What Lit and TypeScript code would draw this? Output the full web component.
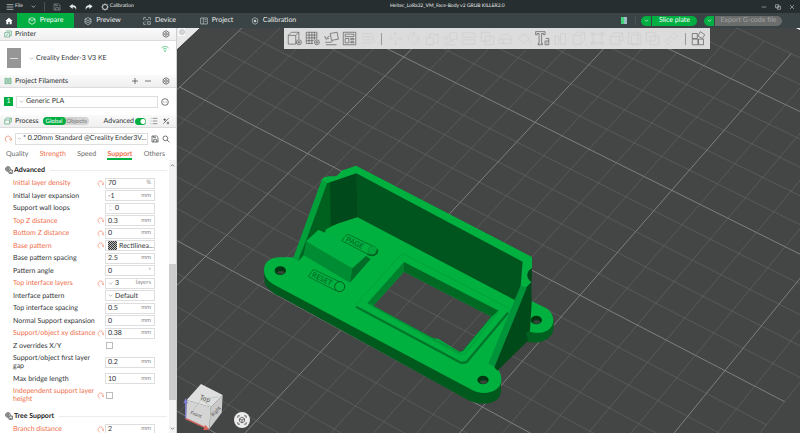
import { LitElement, html, svg, css, nothing } from "lit";
import { customElement } from "lit/decorators.js";
import { classMap } from "lit/directives/class-map.js";

/* ---------- icons, drawn on a 24 unit grid ---------- */
const shapes: Record<string, unknown> = {
  menu: svg`<path d="M2 5H22M2 12H22M2 19H22"/>`,
  chevron: svg`<path d="M4 8l8 8 8-8"/>`,
  up: svg`<path d="M4 16l8-8 8 8"/>`,
  save: svg`<path d="M3 3H17L21 7V21H3ZM8 21V14H17V21M8 3V8H15"/>`,
  undo: svg`<path class="solid" d="M11 3L1 10L11 18V13C17 12 20 15 21 21C24 12 19 7 11 7Z"/>`,
  redo: svg`<path class="solid" d="M13 3L23 10L13 18V13C7 12 4 15 3 21C0 12 5 7 13 7Z"/>`,
  gear: svg`<path d="M12 2L20.500 7V17L12 22L3.500 17V7Z"/><circle cx="12" cy="12" r="4"/>`,
  cog: svg`<circle cx="12" cy="12" r="8"/><path d="M12 1V7M12 17V23M1 12H7M17 12H23M4 4L8 8M20 4L16 8M4 20L8 16M20 20L16 16"/>`,
  home: svg`<path class="solid" d="M12 2L1 12H4V22H10V15H14V22H20V12H23Z"/>`,
  cube: svg`<path d="M12 2L21 6V17L12 22L3 17V6ZM3 6L12 11L21 6"/>`,
  layers: svg`<path d="M12 2L21 6L12 11L3 6ZM3 6V18L12 23L21 18V6M3 12L12 17L21 12"/>`,
  device: svg`<path d="M2 9V2H9M15 2H22V9M2 15V22H9M14 14H22V22H14ZM8 8H16M8 14H5"/>`,
  project: svg`<path d="M2 3H22V21H2ZM10 3V21M14 8H19M14 13H19"/>`,
  target: svg`<path d="M12 2L20 6V17L12 22L4 17V6Z"/><circle class="solid" cx="12" cy="12" r="4"/>`,
  minimize: svg`<path d="M3 12H21"/>`,
  restore: svg`<path d="M2 3H15V15H2ZM9 9H22V21H9Z"/>`,
  close: svg`<path d="M4 4L20 20M20 4L4 20"/>`,
  plus: svg`<path d="M12 3V21M3 12H21"/>`,
  dots: svg`<circle cx="12" cy="12" r="10"/><path d="M6 12H8M11 12H13M16 12H18"/>`,
  panel: svg`<circle cx="12" cy="12" r="10"/><path d="M12 5V19M8 9V15M16 9V15"/>`,
  search: svg`<circle cx="10" cy="10" r="7"/><path d="M15 15L22 22"/>`,
  list: svg`<path d="M8 4H22M8 12H22M8 20H22M2 4H4M2 12H4M2 20H4"/>`,
  compare: svg`<path d="M4 20L20 4M4 8H12M8 4V12M14 18H21M18 14V22"/>`,
  wifi: svg`<path d="M1 9C7 3 17 3 23 9M6 13C9 10 15 10 18 13M10 17H14L12 20Z"/>`,
  revert: svg`<path d="M9 21C2 17 2 7 9 4C15 1 21 6 21 12M16 12L21 17L24 10"/>`,
  printer: svg`<path d="M6 3H22V17H17M2 8H17V21H2ZM6 17L13 12"/>`,
  spools: svg`<path d="M3 4H10V20H3ZM14 4H21V20H14ZM6 4V20M18 4V20"/>`,
  process: svg`<path d="M7 3H22V15H17M2 9H17V21H2ZM2 9L7 3M17 9L22 3"/>`,
  support: svg`<circle cx="9" cy="9" r="7"/><circle cx="9" cy="9" r="3"/><path d="M9 2V5M2 9H5M9 13V16M16 12H22V22H12V16M15 19H19"/>`,
  addCube: svg`<path d="M2 7H14V21H2ZM2 7L7 2H19L14 7M19 2V13"/><circle cx="19" cy="18" r="4"/><path d="M19 15.500V20.500M16.500 18H21.500"/>`,
  addPlate: svg`<path d="M2 2H19V12M2 2V20H13M2 6.500H19M2 11H19M2 15.500H14M6.500 2V20M11 2V20M15 2V14"/><circle cx="19" cy="18" r="4"/><path d="M19 15.500V20.500M16.500 18H21.500"/>`,
  orient: svg`<path d="M10 4L21 2L23 13L12 15ZM9 8L4 11M1 8L3 13L8 12M2 18H11L14 16M3 22H20"/>`,
  arrange: svg`<path d="M2 2H22V22H2ZM5 5H19V9H5ZM5 12H11V19H5ZM14 12H19V14H14ZM14 17H19V19H14Z"/>`,
  lines: svg`<path d="M3 4H18M3 9H18M3 14H18M3 19H18M18 4L21 7V19"/>`,
  move: svg`<path d="M12 2V9M12 15V22M2 12H9M15 12H22M9 5L12 2L15 5M9 19L12 22L15 19M5 9L2 12L5 15M19 9L22 12L19 15"/>`,
  rotate: svg`<path d="M4 14C1 6 8 1 14 4L13 1M14 4L11 7M12 6L20 12L12 21L5 14ZM20 9C24 16 18 22 13 22"/>`,
  scale: svg`<path d="M2 11H13V22H2ZM7 11V5H21V19H13M15 9L20 4"/>`,
  cut: svg`<path d="M2 3H22V10H2ZM2 14H22V21H2Z"/>`,
  bool: svg`<path d="M2 2H16V16H2ZM8 8H22V22H8Z"/>`,
  paint: svg`<path d="M3 12L12 4L20 13L11 20ZM7 3L12 8M21 14V20"/>`,
  hull: svg`<path d="M2 13L8 5H17L21 12M2 13H21V20H2ZM8 13V20"/>`,
  text: svg`<path d="M1 1H16V6H13.500V4H10.500V20H12V22H5V20H6.500V4H3.500V6H1Z"/><path d="M17 12H22V22H16V16H22M19 18V20"/>`,
  steps: svg`<path d="M3 8H9V21H3ZM12 4H20V21H12Z"/>`,
  box: svg`<path d="M2 7H14V21H2ZM2 7L8 2H20L14 7M20 2V15L14 21"/>`,
  points: svg`<path d="M5 5H19V19H5ZM2 2H6V6H2ZM18 2H22V6H18ZM2 18H6V22H2ZM18 18H22V22H18Z"/>`,
  frame: svg`<path d="M2 2H18V20H2ZM7 6H22V22H7Z"/>`,
  ruler: svg`<path d="M2 17L16 3L21 8L7 22ZM6 13L9 16M10 9L13 12"/>`,
  assembly: svg`<path d="M2 4H10V12H2ZM2 13H11V22H2ZM12 13H20V22H12ZM15 1L22 6L18 12L11 8Z"/>`,
  focus: svg`<path d="M2 7V2H7M17 2H22V7M22 17V22H17M7 22H2V17M12 5L18 9V15L12 19L6 15V9ZM6 9L12 12L18 9M12 12V19"/>`,
};

const icon = (name: string, kind = "") =>
  html`<svg class="icon ${kind}" viewBox="0 0 24 24" aria-hidden="true">${shapes[name]}</svg>`;

const iconStyles = css`
  .icon { width: 8px; height: 8px; flex: none; display: block; fill: none; stroke: currentColor; stroke-width: 2; }
  .icon .solid { fill: currentColor; stroke: none; }
  .icon.tiny { width: 5px; height: 5px; stroke-width: 3; }
  .icon.big { width: 15px; height: 15px; stroke-width: 1; }
  button, input, select { font: inherit; color: inherit; text-rendering: inherit; margin: 0; padding: 0; border: 0; background: none; outline: 0; min-width: 0; }
  button { display: flex; align-items: center; justify-content: center; white-space: nowrap; }
  * { box-sizing: border-box; }
`;

/* ---------- window title and main tabs ---------- */
@customElement("app-header")
class AppHeader extends LitElement {
  static styles = [iconStyles, css`
    :host { display: block; color: #e6e8e8; }
    .title { display: flex; justify-content: space-between; align-items: center; height: 13px; background: #262e30; font-size: 5px; }
    .menu { display: flex; align-items: center; gap: 8px; padding-left: 6px; }
    .menu button { gap: 1px; }
    .rule { width: 1px; height: 9px; background: #4a5254; }
    .dim { color: #8d9597; }
    h1 { margin: 0; font-size: 5px; font-weight: 400; }
    .window { display: flex; gap: 8px; padding-right: 5px; }
    .window .icon { width: 6px; height: 6px; }
    .bar { display: flex; height: 15px; background: #3a4446; }
    .home { width: 17px; color: #fff; }
    .tab { width: 57px; gap: 4px; }
    .tab .icon { stroke-width: 2; color: #c5cbcc; }
    .active { background: #00ae42; color: #fff; }
    .active .icon { color: #fff; }
    .actions { display: flex; align-items: center; margin-left: auto; padding-right: 18px; }
    .actions .rule { margin: 0 5px 0 8px; }
    .pill { display: flex; gap: 1px; height: 10px; margin-right: 7px; border-radius: 5px; overflow: hidden; }
    .pill:last-child { margin-right: 0; }
    .pill button { background: #00ae42; color: #fff; }
    .pill .drop { width: 10px; }
    .pill .slice { width: 45px; }
    .pill .export { width: 67px; background: #6b6d6d; color: #a0a2a2; }
    .stats { width: 6px; height: 7px; background: linear-gradient(90deg, #44d57a 50%, #9bbcc0 50%); }
  `];
  render() {
    const tabs = [["Prepare", "cube"], ["Preview", "layers"], ["Device", "device"], ["Project", "project"], ["Calibration", "target"]];
    return html`
      <header class="title">
        <div class="menu">
          <button>${icon("menu")}File</button>
          <button aria-label="File menu">${icon("chevron", "tiny")}</button>
          <span class="rule"></span>
          <button class="dim" aria-label="Save">${icon("save")}</button>
          <button aria-label="Undo">${icon("undo")}</button>
          <button aria-label="Redo">${icon("redo")}</button>
          <button>${icon("cog")}Calibration</button>
        </div>
        <h1>Heltec_LoRa32_VM_Face-Body v2 GRUB KILLER2.0</h1>
        <div class="window">
          <button aria-label="Minimize">${icon("minimize")}</button>
          <button aria-label="Restore">${icon("restore")}</button>
          <button aria-label="Close">${icon("close")}</button>
        </div>
      </header>
      <nav class="bar">
        <button class="home" aria-label="Home">${icon("home")}</button>
        ${tabs.map(([t, i], n) => html`<button class=${classMap({ tab: true, active: n === 0 })}>${icon(i)}${t}</button>`)}
        <div class="actions">
          <span class="stats"></span><span class="rule"></span>
          <div class="pill"><button class="drop" aria-label="Slice options">${icon("chevron", "tiny")}</button><button class="slice">Slice plate</button></div>
          <div class="pill"><button class="drop" aria-label="Export options">${icon("chevron", "tiny")}</button><button class="export">Export G-code file</button></div>
        </div>
      </nav>`;
  }
}

/* ---------- settings panel ---------- */
interface Setting {
  label: string;
  value?: string;
  unit?: string;
  changed?: boolean;
  kind?: "text" | "spin" | "select" | "combo" | "pattern" | "check";
}

const advanced: Setting[] = [
  { label: "Initial layer density", value: "70", unit: "%", changed: true },
  { label: "Initial layer expansion", value: "-1", unit: "mm" },
  { label: "Support wall loops", value: "0", kind: "spin" },
  { label: "Top Z distance", value: "0.3", unit: "mm", changed: true },
  { label: "Bottom Z distance", value: "0", unit: "mm", changed: true },
  { label: "Base pattern", value: "Rectilinea...", kind: "pattern", changed: true },
  { label: "Base pattern spacing", value: "2.5", unit: "mm" },
  { label: "Pattern angle", value: "0", unit: "°" },
  { label: "Top interface layers", value: "3", unit: "layers", kind: "combo", changed: true },
  { label: "Interface pattern", value: "Default", kind: "select" },
  { label: "Top interface spacing", value: "0.5", unit: "mm" },
  { label: "Normal Support expansion", value: "0", unit: "mm" },
  { label: "Support/object xy distance", value: "0.38", unit: "mm", changed: true },
  { label: "Z overrides X/Y", kind: "check" },
  { label: "Support/object first layer gap", value: "0.2", unit: "mm" },
  { label: "Max bridge length", value: "10", unit: "mm" },
  { label: "Independent support layer height", kind: "check", changed: true },
];
const tree: Setting[] = [{ label: "Branch distance", value: "2", unit: "mm", changed: true }];

@customElement("settings-panel")
class SettingsPanel extends LitElement {
  static styles = [iconStyles, css`
    :host { display: flex; flex-direction: column; min-height: 0; background: #fff; color: #333637; }
    h2, h3 { margin: 0; font-size: inherit; font-weight: 400; }
    .head { display: flex; align-items: center; flex: none; height: 13px; padding: 0 6px 0 4px; gap: 3px; background: linear-gradient(#fafafa, #efefef); border-bottom: 1px solid #dcdcdc; }
    .head > .icon { color: #4fa477; }
    .head h2 { color: #2c2e2f; }
    .push { margin-left: auto; }
    .head .add { margin-right: 2px; }
    .head .remove { margin-right: 7px; }
    .printer { display: flex; align-items: center; flex: none; height: 34px; padding: 0 7px; }
    .thumb { display: grid; place-items: center; width: 14px; height: 20px; background: #969696; }
    .thumb span { width: 8px; height: 1px; background: #ddd; }
    select { appearance: none; flex: 1; overflow: hidden; text-overflow: clip; white-space: nowrap; }
    .drop { display: flex; align-items: center; gap: 2px; flex: 1; min-width: 0; color: #9a9a9a; }
    .drop select { color: #333637; }
    .printer .drop { margin-left: 8px; }
    .signal { align-self: flex-start; margin-top: 4px; color: #2fbb67; }
    .slot { display: flex; align-items: center; flex: none; gap: 3px; padding: 0 7px 0 4px; }
    .filament { height: 27px; }
    .slot .drop { height: 12px; padding-left: 2px; border: 1px solid #dedede; }
    .preset { height: 21px; padding-right: 6px; }
    .preset .drop { gap: 1px; padding-left: 1px; }
    .swatch { width: 9px; height: 9px; background: #00ae42; color: #fff; line-height: 9px; text-align: center; }
    .orange { color: #ef6f4c; }
    .scope { display: flex; align-items: center; height: 8px; margin-left: 1px; border-radius: 4px; background: #d4d4d4; font-size: 6px; color: #777; }
    .scope button { height: 8px; padding: 0 2px 0 1px; border-radius: 4px; }
    .scope .on { padding: 0 3px; background: #00ae42; color: #fff; }
    .switch { display: flex; align-items: center; gap: 1px; margin-left: auto; }
    .switch input { appearance: none; width: 11px; height: 7px; border-radius: 4px; background: radial-gradient(circle at 8px 50%, #fff 2px, #00ae42 3px); }
    .head .listing { margin: 0 1px 0 1px; color: #666; }
    .tabs { display: flex; justify-content: space-between; flex: none; height: 11px; padding: 0 11px 0 6px; }
    .tabs button { color: #6c6c6c; border-bottom: 1px solid transparent; }
    .tabs .changed { color: #ef6f4c; }
    .tabs .current { font-weight: 700; border-bottom: 2px solid #00ae42; padding-top: 1px; }
    .scroll { display: flex; flex: 1; min-height: 0; }
    .list { flex: 1; min-width: 0; overflow: hidden; padding: 3px 2px 0 5px; }
    .group { display: flex; align-items: center; gap: 1px; height: 14px; font-weight: 700; color: #222; }
    .group h3 { font-weight: 700; }
    .group::after { content: ""; flex: 1; height: 1px; margin-left: 4px; background: #ececec; }
    .row { display: grid; grid-template-columns: 83px 7px 50px; gap: 0 1px; align-items: center; min-height: 12px; padding-left: 8px; line-height: 8px; }
    .row:nth-of-type(even) { min-height: 13px; }
    .row.two { min-height: 20px; }
    .row.changed .name, .row.changed > .icon { color: #ef6f4c; }
    .row > .icon { width: 7px; height: 7px; }
    .field { display: flex; align-items: center; grid-column: 3; height: 11px; padding: 0 3px 0 2px; gap: 2px; border: 1px solid #dedede; }
    .field.pattern { padding: 0 0 0 2px; }
    .field input, .field select { flex: 1; width: 10px; height: 9px; }
    .field .unit { font-size: 6px; color: #8c8c8c; }
    .field > .icon { color: #999; }
    .spin { display: flex; flex-direction: column; color: #999; }
    .spin .icon { width: 5px; height: 4px; }
    .hatch { width: 9px; height: 9px; background: repeating-conic-gradient(#333 0 25%, #bbb 0 50%) 0 0 / 2px 2px; }
    .tick { grid-column: 3; appearance: none; width: 7px; height: 7px; margin-left: 1px; border: 1px solid #bdbdbd; background: #fff; }
    .later { margin-top: 4px; }
    .bar { display: flex; flex-direction: column; align-items: center; justify-content: space-between; width: 7px; padding: 3px 0 2px; background: linear-gradient(#f3f3f3 38%, #cdcdcd 38% 88%, #f3f3f3 88%); color: #444; }
  `];

  row(s: Setting) {
    const id = s.label.replace(/\W+/g, "-").toLowerCase();
    const kind = s.kind ?? "text";
    const two = s.label.length > 28;
    return html`<div class=${classMap({ row: true, changed: !!s.changed, two })}>
      <label class="name" for=${id}>${s.label}</label>
      ${s.changed ? icon("revert") : nothing}
      ${kind === "check"
        ? html`<input class="tick" type="checkbox" id=${id}>`
        : html`<div class=${classMap({ field: true, pattern: kind === "pattern" })}>
            ${kind === "spin" ? html`<span class="spin">${icon("up")}${icon("chevron")}</span>` : nothing}
            ${kind === "select" || kind === "combo" ? icon("chevron", "tiny") : nothing}
            ${kind === "pattern" ? html`<span class="hatch"></span>` : nothing}
            ${kind === "select" || kind === "pattern"
              ? html`<select id=${id}><option>${s.value}</option></select>`
              : html`<input id=${id} value=${s.value}>`}
            ${s.unit ? html`<span class="unit">${s.unit}</span>` : nothing}
          </div>`}
    </div>`;
  }

  render() {
    return html`
      <div class="head">${icon("printer")}<h2>Printer</h2><button class="push" aria-label="Printer settings">${icon("gear")}</button></div>
      <div class="printer">
        <div class="thumb"><span></span></div>
        <div class="drop">${icon("chevron", "tiny")}<select aria-label="Printer"><option>Creality Ender-3 V3 KE</option></select></div>
        <span class="signal">${icon("wifi")}</span>
      </div>
      <div class="head">${icon("spools")}<h2>Project Filaments</h2>
        <button class="push add" aria-label="Add filament">${icon("plus")}</button>
        <button class="remove" aria-label="Remove filament">${icon("minimize")}</button>
        <button aria-label="Filament settings">${icon("gear")}</button>
      </div>
      <div class="slot filament">
        <span class="swatch">1</span>
        <div class="drop">${icon("chevron", "tiny")}<select aria-label="Filament"><option>Generic PLA</option></select></div>
        <button aria-label="More">${icon("dots")}</button>
      </div>
      <div class="head">${icon("process")}<h2>Process</h2>
        <div class="scope"><button class="on">Global</button><button>Objects</button></div>
        <label class="switch">Advanced<input type="checkbox" role="switch" checked></label>
        <button class="listing" aria-label="Setting list">${icon("list")}</button>
        <button aria-label="Compare presets">${icon("compare")}</button>
      </div>
      <div class="slot preset">
        <button class="orange" aria-label="Revert">${icon("revert")}</button>
        <div class="drop">${icon("chevron", "tiny")}<select aria-label="Process preset"><option>* 0.20mm Standard @Creality Ender3V...</option></select></div>
        <button aria-label="Save preset">${icon("save")}</button>
        <button aria-label="Search">${icon("search")}</button>
      </div>
      <div class="tabs">
        <button>Quality</button><button class="changed">Strength</button><button>Speed</button>
        <button class="changed current">Support</button><button>Others</button>
      </div>
      <div class="scroll">
        <div class="list">
          <section><header class="group">${icon("support")}<h3>Advanced</h3></header>${advanced.map((s) => this.row(s))}</section>
          <section class="later"><header class="group">${icon("support")}<h3>Tree Support</h3></header>${tree.map((s) => this.row(s))}</section>
        </div>
        <div class="bar">${icon("up", "tiny")}${icon("chevron", "tiny")}</div>
      </div>`;
  }
}

/* ---------- 3D plate ---------- */
/* Projects a bed position (one unit = 50 mm) onto the drawing. */
const project = (a: number, b: number) => {
  const w = 1 - 0.0303 * a - 0.0205 * b;
  const x = (-109.3 * a + 125.7 * b + 671.7) / w;
  const y = (96 * a + 65.5 * b + 190.3) / w;
  return `${((x - 176) * 3).toFixed(1)} ${((y - 20) * 3).toFixed(1)}`;
};

const gridLines = () => {
  const minor: string[] = [];
  const major: string[] = [];
  for (let i = 0; i <= 22; i++) {
    const a = -1.4 + i * 0.2;
    const b = -3 + i * 0.2;
    ((i - 2) % 5 === 0 ? major : minor).push(`M${project(a, -3)}L${project(a, 1.4)}`);
    (i % 5 === 0 ? major : minor).push(`M${project(-1.4, b)}L${project(3, b)}`);
  }
  return { minor: minor.join(""), major: major.join("") };
};

@customElement("plate-view")
class PlateView extends LitElement {
  static styles = [iconStyles, css`
    :host { display: block; position: relative; overflow: hidden; background: #e9e9e9; }
    .scene { display: block; width: 100%; height: 100%; }
    .tools { position: absolute; top: 0; left: 107px; right: 90px; display: flex; align-items: center; height: 21px; padding: 0 2px 0 1px; background: #dcdcdc; color: #4e4e4e; }
    .tools button { flex: 1; }
    .tools .off { color: #cbcbcb; }
    .tools .rule { flex: none; width: 1px; height: 12px; margin: 0 4px; background: #999; }
    .collapse { position: absolute; top: 0; left: 1px; width: 7px; height: 8px; background: #fafafa; color: #888; }
    .fit { position: absolute; left: 57px; bottom: 5px; width: 16px; height: 16px; border-radius: 50%; background: #ececec; color: #555; }
    .fit .icon { width: 10px; height: 10px; }
    .collapse .icon { width: 6px; height: 6px; }
    .minor { stroke: #636464; stroke-width: 2; fill: none; }
    .major { stroke: #7e7f7f; stroke-width: 3; fill: none; }
    .top { fill: #00b140; }
    .engraved { font-size: 22px; font-weight: 700; fill: #00742a; }
    .face { font-size: 20px; fill: #555; }
    .small { font-size: 15px; }
  `];
  render() {
    const g = gridLines();
    const on = ["addCube", "addPlate", "orient", "arrange"];
    const off = ["lines", "|", "move", "rotate", "scale", "orient", "cut", "bool", "hull", "paint", "text", "steps", "box", "points", "process", "frame", "bool", "ruler", "|", "assembly"];
    const live = new Set([...on, "text", "assembly"]);
    return html`
      <svg class="scene" viewBox="3 24 1869 1215" preserveAspectRatio="xMidYMid slice" role="img" aria-label="Build plate with model">
        <path fill="#1d1e1e" d="M${project(-1.61, -3.22)}L${project(-1.61, 1.64)}L${project(3.3, 1.64)}L${project(3.3, -3.22)}Z"/>
        <path fill="#444545" d="M${project(-1.61, -3.22)}L${project(-1.61, 1.59)}L${project(3.3, 1.59)}L${project(3.3, -3.22)}Z"/>
        <path class="minor" d=${g.minor}/>
        <path class="major" d=${g.major}/>

        <!-- rear foot -->
        <path fill="#00601f" d="M1040 900H1133V925C1128 958 1095 976 1050 964Z"/>
        <path class="top" d="M1066 843L1110 864C1142 884 1140 930 1096 938C1076 940 1060 936 1050 930Z"/>
        <ellipse cx="1081" cy="900" rx="17" ry="13" fill="#003812"/>
        <path fill="#34463a" d="M1070 905C1078 899 1088 900 1094 906C1089 914 1076 914 1070 905Z"/>

        <!-- base plate, with the display opening -->
        <path fill="#005a1e" d="M264 752L266 788C275 808 290 820 320 834L880 1142C925 1160 970 1150 975 1115V1078L700 950L300 760Z"/>
        <path fill="#444545" d="M684 755L592 857L852 996L862 992L947 890Z"/>
        <svg x="592" y="755" width="355" height="241" viewBox="592 755 355 241">
          <defs><clipPath id="opening"><path d="M684 755L592 857L852 996L862 992L947 890Z"/></clipPath></defs>
          <g clip-path="url(#opening)"><path class="minor" d=${g.minor}/><path class="major" d=${g.major}/></g>
        </svg>
        <path class="top" fill-rule="evenodd" d="M264 750C264 725 285 712 312 712H350L368 722L400 640L545 590L1020 838L1000 900L940 1030C966 1040 978 1062 976 1082C974 1112 930 1130 890 1111L300 797C277 785 264 772 264 750ZM684 755L592 857L770 954L786 956L852 996L862 992L947 890Z"/>
        <path fill="#006a24" d="M684 726L968 872L947 890L684 755Z"/>
        <path fill="#00812d" d="M684 726L574 850L592 857L684 755Z"/>
        <path fill="none" stroke="#009a38" stroke-width="2" d="M538 855L679 700L1000 865"/>
        <path fill="none" stroke="#00772b" stroke-width="7" stroke-linejoin="round" d="M540 860L856 1029L872 1026L996 878"/>
        <path fill="none" stroke="#00a53c" stroke-width="5" d="M577 853L850 1004L868 1000L968 874"/>
        <path fill="none" stroke="#008a31" stroke-width="3" d="M590 858L848 997L860 994L948 888"/>

        <!-- walls -->
        <path fill="#00541e" d="M541 458L1042 722L1038 795L1016 840L545 592Z"/>
        <path fill="#00611f" d="M449 488L541 458L545 591L486 610L450 628L447 638L427 630L392 668L384 704L368 722Z"/>
        <path fill="#00491a" d="M462 484L541 458L545 591L486 610L464 618Z"/>
        <path fill="#00a03b" d="M436 482L453 490L368 723L352 713Z"/>
        <path class="top" d="M436 482C440 470 455 467 475 469C492 466 490 452 505 449L540 437L1068 711V745C1050 754 1050 776 1066 786L1060 800L1046 804L1034 797L1040 725L541 460L482 480L453 490Z"/>
        <path fill="#004a1a" d="M1066 786L1050 803L955 1042L964 1052L1056 962L1050 938L1062 934L1067 850Z"/>
        <path fill="#004818" d="M1068 745C1050 754 1050 776 1067 786Z"/>
        <path fill="#00943a" d="M1034 797L1052 803L955 1042L937 1030Z"/>

        <!-- switch block -->
        <path fill="#00b043" d="M427 630L573 706L529 745L390 664Z"/>
        <path fill="#008c33" d="M390 664L529 745L522 788L382 705Z"/>
        <path fill="#006c27" d="M529 745L570 708L584 717L522 788Z"/>
        <path fill="#006624" d="M390 664L382 705L368 722L372 705Z"/>

        <!-- engraved button marks -->
        <path fill="none" stroke="#00742a" stroke-width="3" d="M497 662L514 642L592 679M497 662L578 704M412 748L397 770L480 812M412 748L492 786"/>
        <circle cx="590" cy="692" r="14" fill="#00a53c" stroke="#008a31" stroke-width="2"/>
        <path fill="none" stroke="#00601f" stroke-width="5" d="M604 688C606 703 592 711 574 703"/>
        <circle cx="491" cy="800" r="15" fill="none" stroke="#005a1e" stroke-width="3"/>
        <text class="engraved" x="508" y="663" transform="rotate(26 508 663)">PAGE</text>
        <text class="engraved" x="406" y="769" transform="rotate(26 406 769)">RESET</text>

        <!-- mounting holes -->
        <ellipse cx="313" cy="752" rx="17" ry="13" fill="#003812"/>
        <path fill="#34463a" d="M303 757C310 751 321 752 327 757C321 766 308 766 303 757Z"/>
        <ellipse cx="921" cy="1080" rx="17" ry="13" fill="#003812"/>
        <path fill="#34463a" d="M911 1085C918 1079 929 1080 935 1085C929 1094 916 1094 911 1085Z"/>

        <!-- view cube -->
        <path fill="#dfdfdf" d="M75 1092L140 1125L104 1162L32 1140Z"/>
        <path fill="#d4d4d4" d="M32 1140L104 1162L100 1227L30 1195Z"/>
        <path fill="#cacaca" d="M140 1125L137 1178L100 1227L104 1162Z"/>
        <path fill="none" stroke="#a9bfae" stroke-width="2" d="M52 1170L76 1138L104 1160V1200M76 1138L128 1130"/>
        <path fill="none" stroke="#7a7ad0" stroke-width="4" d="M29 1196V1146"/>
        <path fill="#7a7ad0" d="M22 1150L29 1134L36 1150Z"/>
        <path fill="none" stroke="#d86a64" stroke-width="4" d="M29 1196L88 1223"/>
        <path fill="#e0655f" d="M88 1214L100 1229L82 1230Z"/>
        <text class="face" x="70" y="1137" transform="rotate(18 70 1137)">Top</text>
        <text class="face small" x="42" y="1182" transform="rotate(20 42 1182)">Front</text>
        <text class="face small" x="112" y="1190" transform="rotate(-48 112 1190)">Right</text>
      </svg>
      <div class="tools" role="toolbar">
        ${[...on, ...off].map((n, i) => n === "|"
          ? html`<span class="rule"></span>`
          : html`<button class=${classMap({ off: !live.has(n) || (n === "orient" && i > 4) })} aria-label=${n}>${icon(n, "big")}</button>`)}
      </div>
      <button class="collapse" aria-label="Collapse sidebar">${icon("panel")}</button>
      <button class="fit" aria-label="Fit view">${icon("focus")}</button>`;
  }
}

@customElement("app-root")
class AppRoot extends LitElement {
  static styles = css`
    :host { display: grid; grid-template: auto minmax(0, 1fr) / 176px minmax(0, 1fr); height: 100vh; overflow: hidden; font: 7px/9px Lato, "Noto Sans", sans-serif; text-rendering: geometricPrecision; background: #fff; }
    app-header { grid-column: 1 / -1; }
    plate-view { border-left: 1px solid #d0d0d0; }
  `;
  render() {
    return html`<app-header></app-header><settings-panel></settings-panel><plate-view></plate-view>`;
  }
}
